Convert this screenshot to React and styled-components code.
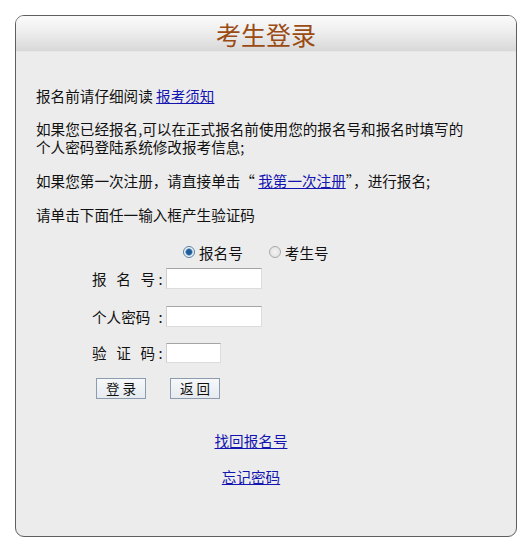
import React from 'react';
import styled, { createGlobalStyle } from 'styled-components';

const GlobalStyle = createGlobalStyle`
body {
  margin: 0;
  padding: 0;
  background: #ffffff;
  font-family: 'Noto Sans CJK SC', 'Noto Sans', sans-serif;
  color: #111;
}
`;

const Page = styled.div`
  padding: 15px 0 0 15px;
`;

const Panel = styled.div`
  box-sizing: border-box;
  width: 502px;
  height: 522px;
  border: 1px solid #5f5f5f;
  border-radius: 9px;
  background: #ececec;
  overflow: hidden;
`;

const Header = styled.div`
  height: 35px;
  background: linear-gradient(180deg, #fbfbfb 0%, #eeeeee 45%, #d8d8d8 100%);
  border-bottom: 1px solid #e6e6e6;
  display: flex;
  align-items: center;
  justify-content: center;
`;

const Title = styled.h1`
  margin: 0;
  font-size: 25px;
  font-weight: normal;
  line-height: 30px;
  color: #9a4a12;
`;

const Body = styled.div`
  padding: 35px 52px 0 20px;
  font-size: 14.6px;
`;

const Para = styled.p`
  margin: 0 0 ${({ gap }) => gap || 16}px 0;
  line-height: 18px;
`;

const Link = styled.a`
  color: #1414b0;
  text-decoration: underline;
  cursor: pointer;
`;

const RadioRow = styled.div`
  display: flex;
  align-items: center;
  height: 18px;
  margin: 19px 0 0 147px;
  gap: 4px;
`;

const RadioDot = styled.span`
  box-sizing: border-box;
  width: 12px;
  height: 12px;
  border-radius: 50%;
  border: 1px solid ${({ checked }) => (checked ? '#5a7ea0' : '#a8a8a8')};
  background: ${({ checked }) =>
    checked
      ? 'radial-gradient(circle, #1d5d99 0 2.5px, #8fb4d6 3.5px, #eef3f8 4px)'
      : 'radial-gradient(circle, #f4f4f4 0, #dcdcdc 100%)'};
  display: inline-block;
`;

const RadioLabel = styled.span`
  margin-right: ${({ last }) => (last ? 0 : 22)}px;
`;

const FieldRow = styled.div`
  display: flex;
  align-items: center;
  margin: ${({ top }) => top}px 0 0 56px;
`;

const Label = styled.span`
  display: flex;
  justify-content: ${({ spread }) => (spread ? 'space-between' : 'flex-start')};
  width: 63px;
`;

const Colon = styled.span`
  width: 11px;
  text-align: center;
`;

const Input = styled.input`
  box-sizing: border-box;
  width: ${({ w }) => w}px;
  height: ${({ h }) => h || 21}px;
  border: 1px solid #dcdcdc;
  border-top-color: #a4a4a4;
  border-left-color: #cfcfcf;
  background: #fff;
  padding: 0 2px;
  font: inherit;
`;

const ButtonRow = styled.div`
  display: flex;
  gap: 24px;
  margin: 15px 0 0 60px;
`;

const Button = styled.button`
  box-sizing: border-box;
  width: 50px;
  height: 21px;
  border: 1px solid #8c9cae;
  background: linear-gradient(180deg, #f6f8fa 0%, #e6ebf0 100%);
  font-family: inherit;
  font-size: 13.5px;
  line-height: 17px;
  color: #111;
  padding: 0;
  letter-spacing: 3px;
  text-indent: 3px;
`;

const LinkLine = styled.div`
  text-align: center;
  line-height: 18px;
  margin-top: ${({ top }) => top}px;
  padding-left: 2px;
`;

const Field = ({ label, spread, top, w, h }) => (
  <FieldRow top={top}>
    <Label spread={spread}>
      {label.split('').map((c, i) => (
        <span key={i}>{c}</span>
      ))}
    </Label>
    <Colon>:</Colon>
    <Input type="text" w={w} h={h} />
  </FieldRow>
);

export default function App() {
  return (
    <>
      <GlobalStyle />
      <Page>
        <Panel>
          <Header>
            <Title>考生登录</Title>
          </Header>
          <Body>
            <Para gap={15}>
              报名前请仔细阅读 <Link>报考须知</Link>
            </Para>
            <Para>
              如果您已经报名,可以在正式报名前使用您的报名号和报名时填写的个人密码登陆系统修改报考信息;
            </Para>
            <Para>
              如果您第一次注册，请直接单击“ <Link>我第一次注册</Link>”，进行报名;
            </Para>
            <Para gap={0}>请单击下面任一输入框产生验证码</Para>

            <RadioRow>
              <RadioDot checked />
              <RadioLabel>报名号</RadioLabel>
              <RadioDot />
              <RadioLabel last>考生号</RadioLabel>
            </RadioRow>

            <Field label="报名号" spread top={7} w={96} />
            <Field label="个人密码" top={17} w={96} />
            <Field label="验证码" spread top={15} w={55} h={20} />

            <ButtonRow>
              <Button>登录</Button>
              <Button>返回</Button>
            </ButtonRow>

            <LinkLine top={33}>
              <Link>找回报名号</Link>
            </LinkLine>
            <LinkLine top={18}>
              <Link>忘记密码</Link>
            </LinkLine>
          </Body>
        </Panel>
      </Page>
    </>
  );
}
